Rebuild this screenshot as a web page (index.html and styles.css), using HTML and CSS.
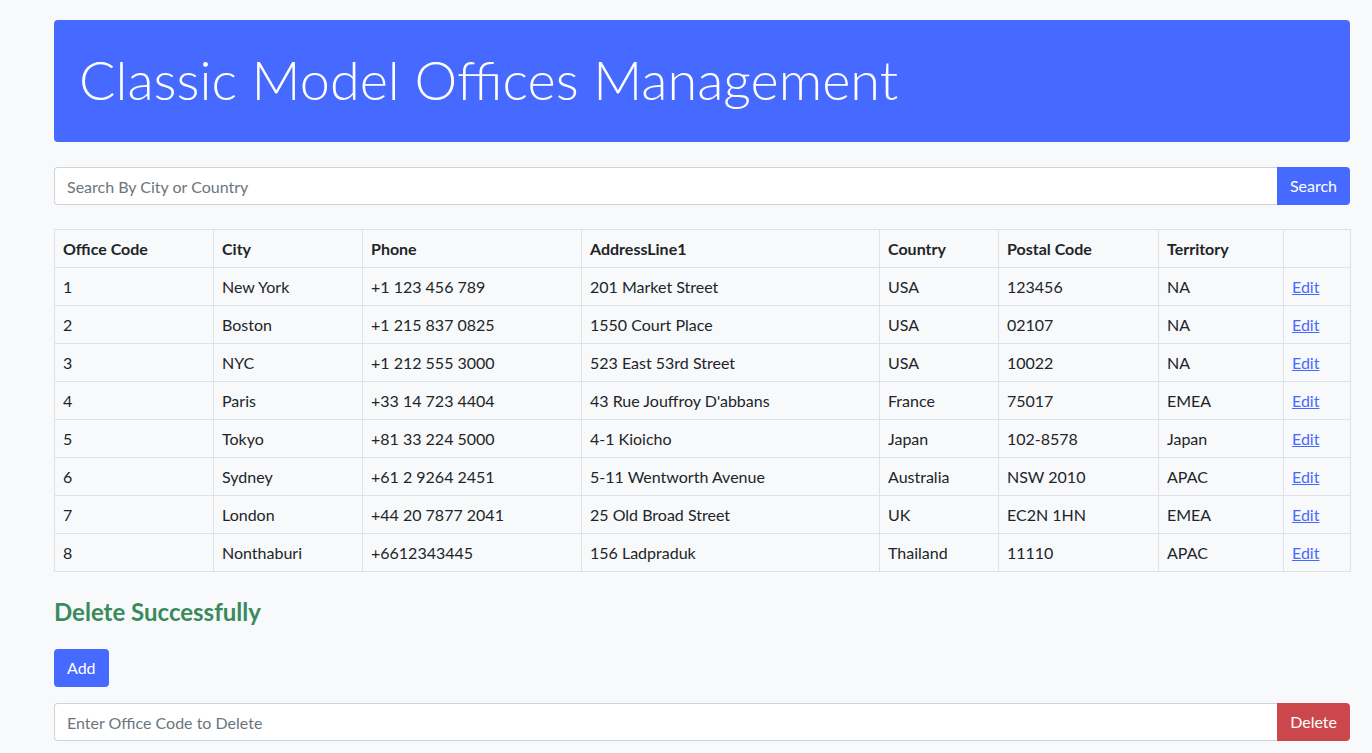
FILE: index.html
```html
<!DOCTYPE html>
<html lang="en">
<head>
<meta charset="utf-8">
<title>Classic Model Offices Management</title>
<link rel="stylesheet" href="styles.css">
</head>
<body>
<main class="page">
  <header class="hero">
    <h1 class="hero-title">Classic Model Offices Management</h1>
  </header>

  <form class="input-group search-group">
    <input class="field" type="text" placeholder="Search By City or Country">
    <button class="btn btn-primary btn-attach" type="button">Search</button>
  </form>

  <table class="offices">
    <thead>
      <tr>
        <th class="c-code">Office Code</th>
        <th class="c-city">City</th>
        <th class="c-phone">Phone</th>
        <th class="c-addr">AddressLine1</th>
        <th class="c-country">Country</th>
        <th class="c-postal">Postal Code</th>
        <th class="c-terr">Territory</th>
        <th class="c-act"></th>
      </tr>
    </thead>
    <tbody>
      <tr><td>1</td><td>New York</td><td>+1 123 456 789</td><td>201 Market Street</td><td>USA</td><td>123456</td><td>NA</td><td><a href="#">Edit</a></td></tr>
      <tr><td>2</td><td>Boston</td><td>+1 215 837 0825</td><td>1550 Court Place</td><td>USA</td><td>02107</td><td>NA</td><td><a href="#">Edit</a></td></tr>
      <tr><td>3</td><td>NYC</td><td>+1 212 555 3000</td><td>523 East 53rd Street</td><td>USA</td><td>10022</td><td>NA</td><td><a href="#">Edit</a></td></tr>
      <tr><td>4</td><td>Paris</td><td>+33 14 723 4404</td><td>43 Rue Jouffroy D'abbans</td><td>France</td><td>75017</td><td>EMEA</td><td><a href="#">Edit</a></td></tr>
      <tr><td>5</td><td>Tokyo</td><td>+81 33 224 5000</td><td>4-1 Kioicho</td><td>Japan</td><td>102-8578</td><td>Japan</td><td><a href="#">Edit</a></td></tr>
      <tr><td>6</td><td>Sydney</td><td>+61 2 9264 2451</td><td>5-11 Wentworth Avenue</td><td>Australia</td><td>NSW 2010</td><td>APAC</td><td><a href="#">Edit</a></td></tr>
      <tr><td>7</td><td>London</td><td>+44 20 7877 2041</td><td>25 Old Broad Street</td><td>UK</td><td>EC2N 1HN</td><td>EMEA</td><td><a href="#">Edit</a></td></tr>
      <tr><td>8</td><td>Nonthaburi</td><td>+6612343445</td><td>156 Ladpraduk</td><td>Thailand</td><td>11110</td><td>APAC</td><td><a href="#">Edit</a></td></tr>
    </tbody>
  </table>

  <h2 class="status">Delete Successfully</h2>

  <div class="actions">
    <button class="btn btn-primary btn-add" type="button">Add</button>
  </div>

  <form class="input-group delete-group">
    <input class="field" type="text" placeholder="Enter Office Code to Delete">
    <button class="btn btn-danger btn-attach" type="button">Delete</button>
  </form>
</main>
</body>
</html>
```

FILE: styles.css
```css
* { box-sizing: border-box; }

html, body {
  margin: 0;
  padding: 0;
  background: #f8f9fa;
}

body {
  font-family: Lato, "Noto Sans", "Liberation Sans", sans-serif;
  font-size: 16px;
  line-height: 1.5;
  color: #212529;
}

.page {
  width: 1296px;
  margin: 0 0 0 54px;
  padding-top: 20px;
  display: flex;
  flex-direction: column;
}

.hero {
  background: #4669ff;
  border-radius: 4px;
  height: 122px;
  padding: 0 25px;
  display: flex;
  align-items: center;
}

.hero-title {
  margin: 0;
  color: #ffffff;
  font-weight: 300;
  font-size: 54px;
  line-height: 1.2;
  padding-bottom: 2px;
}

.input-group {
  display: flex;
  height: 38px;
}

.search-group { margin-top: 25px; }
.delete-group { margin-top: 16px; }

.field {
  flex: 1;
  min-width: 0;
  height: 38px;
  border: 1px solid #ced4da;
  border-right: none;
  border-radius: 4px 0 0 4px;
  background: #ffffff;
  padding: 6px 12px;
  font-family: inherit;
  font-size: 16px;
  color: #212529;
  outline: none;
}

.field::placeholder { color: #6c757d; }

.btn {
  font-family: inherit;
  font-size: 16px;
  line-height: 24px;
  height: 38px;
  padding: 6px 12px;
  border: none;
  border-radius: 4px;
  color: #ffffff;
  cursor: pointer;
}

.btn-add { padding: 6px 13px; }

.btn-attach {
  border-radius: 0 4px 4px 0;
  padding: 6px 13px;
}

.btn-primary { background: #4669ff; }
.btn-danger { background: #cc474b; }

.offices {
  margin-top: 24px;
  width: 1296px;
  border-collapse: collapse;
  table-layout: fixed;
}

.offices th,
.offices td {
  border: 1px solid #dee2e6;
  padding: 6px 8px;
  line-height: 25px;
  text-align: left;
  vertical-align: top;
}

.offices th { font-weight: 700; }

.offices a { color: #4669ff; text-decoration: underline; }

.c-code { width: 159px; }
.c-city { width: 149px; }
.c-phone { width: 219px; }
.c-addr { width: 298px; }
.c-country { width: 119px; }
.c-postal { width: 160px; }
.c-terr { width: 125px; }
.c-act { width: 67px; }

.status {
  margin: 24px 0 0 0;
  color: #3a8a5c;
  font-size: 24px;
  font-weight: 700;
  line-height: 32px;
}

.actions {
  margin-top: 21px;
  display: flex;
}
```
